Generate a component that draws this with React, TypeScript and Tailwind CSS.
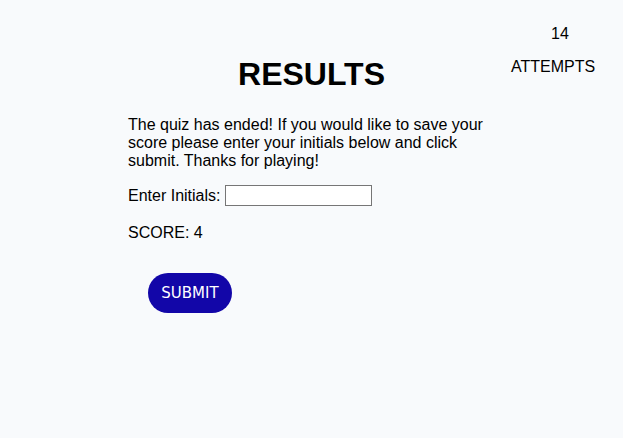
import React, { useState } from 'react';

const App: React.FC = () => {
    const [initials, setInitials] = useState('');

    return (
        <div className="relative min-h-[438px] w-full bg-[#f8fafc] text-black font-['Liberation_Sans',Arial,sans-serif] text-[16px] leading-[normal]">
            {/* Attempts counter */}
            <div className="absolute top-[25px] left-[511px] flex flex-col items-start">
                <p className="ml-[40px]">14</p>
                <p className="mt-[15px]">ATTEMPTS</p>
            </div>

            <div className="mx-auto w-[367px] pt-[56px]">
                <h1 className="text-center text-[32px] font-bold leading-[normal]">RESULTS</h1>

                <p className="mt-[23px]">
                    The quiz has ended! If you would like to save your score please enter your initials below and click submit. Thanks for playing!
                </p>

                <div className="mt-[15px] flex items-center gap-[5px]">
                    <label htmlFor="initials">Enter Initials:</label>
                    <input
                        id="initials"
                        type="text"
                        value={initials}
                        onChange={(e) => setInitials(e.target.value)}
                        className="w-[147px] h-[21px] border border-[#767676] bg-white px-1 text-[13px] outline-none"
                    />
                </div>

                <p className="mt-[18px]">SCORE: 4</p>

                <button className="ml-[20px] mt-[31px] w-[84px] h-[40px] rounded-full bg-[#1206a8] text-white text-[15px] font-['DejaVu_Sans',Tahoma,sans-serif]">
                    SUBMIT
                </button>
            </div>
        </div>
    );
};

export default App;
